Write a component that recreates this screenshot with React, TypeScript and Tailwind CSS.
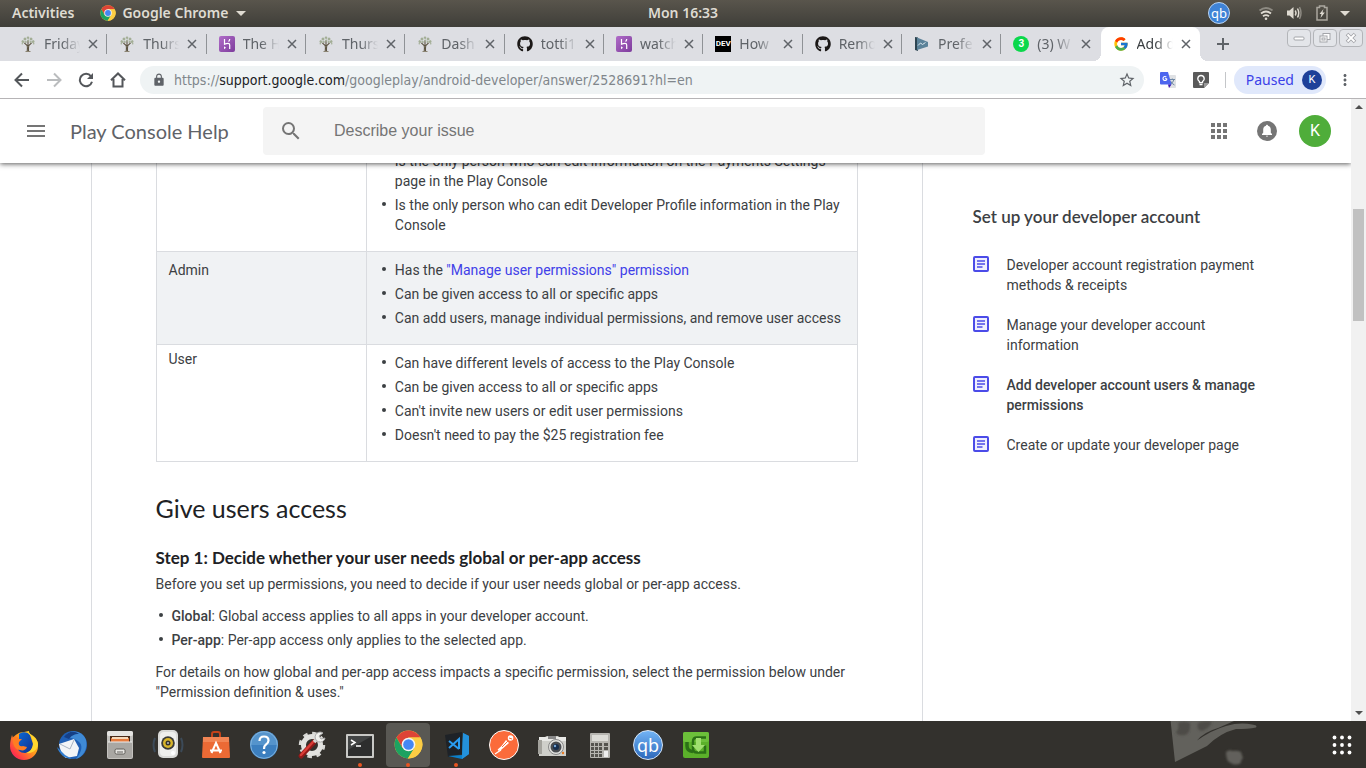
import type { ReactNode } from "react";
import { FaGithub } from "react-icons/fa";
import { FcGoogle } from "react-icons/fc";
import { MdApps, MdMenu, MdSearch, MdStarBorder, MdLock, MdMoreVert } from "react-icons/md";

const UI = "font-['Noto_Sans','Open_Sans',sans-serif]";
const GS = "font-['Lato','Open_Sans',sans-serif]";

/* ---------- favicons ---------- */

function TreeIcon() {
  return (
    <svg viewBox="0 0 16 16" className="size-4" aria-hidden="true">
      <path d="M7.2 15.500c.4-2.500.3-4.500 0-6L4.300 6.800M8.500 15.500c-.2-2.500 0-4.500.3-6l2.800-2.700M8 10V4.500" stroke="#5d5442" strokeWidth="1.100" fill="none" />
      <path d="M5.500 15.500h5" stroke="#8b8473" strokeWidth="1" />
      <g fill="#a3ae96">
        <circle cx="3" cy="5.500" r="1.500" /><circle cx="5" cy="3" r="1.500" /><circle cx="8" cy="1.800" r="1.300" />
        <circle cx="11" cy="3" r="1.500" /><circle cx="13" cy="5.500" r="1.500" /><circle cx="5.800" cy="6" r="1" />
        <circle cx="8.200" cy="4.600" r="1.100" /><circle cx="10.500" cy="6" r="1" /><circle cx="2.300" cy="7.800" r=".8" />
        <circle cx="13.700" cy="7.800" r=".8" />
      </g>
      <g fill="#dadde0"><circle cx="4" cy="4.500" r=".6" /><circle cx="7" cy="3" r=".6" /><circle cx="12" cy="4.500" r=".6" /><circle cx="9.500" cy="3" r=".5" /></g>
    </svg>
  );
}

function HerokuIcon() {
  return (
    <svg viewBox="0 0 16 16" className="size-4" aria-hidden="true">
      <defs><linearGradient id="heroku" x1="0" y1="0" x2="1" y2="1"><stop stopColor="#b06cc8" /><stop offset="1" stopColor="#7d3c9c" /></linearGradient></defs>
      <rect width="16" height="16" rx="2" fill="url(#heroku)" />
      <path d="M5.500 3v5.300c1.200-.6 2.500-.9 3.500-.9 1.300 0 1.700.7 1.700 1.600v4M10.700 3c0 1-.4 1.800-1.100 2.600" stroke="#fff" strokeWidth="1.200" fill="none" />
      <path d="M5 10.300l2 1.500-2 1.500z" fill="#fff" />
    </svg>
  );
}

function DevIcon() {
  return <span className="flex size-4 items-center justify-center bg-black font-['Roboto',sans-serif] text-[8px] leading-4 font-bold text-white">DEV</span>;
}

function FlagIcon() {
  return (
    <svg viewBox="0 0 16 16" className="size-4" aria-hidden="true">
      <path d="M1 1l3 .5v13.500l-3-1z" fill="#2d4552" />
      <path d="M3 1.500L14 6v4.500L3 14z" fill="#5b8299" />
      <path d="M4 9.500L6.500 7l2 1.500 3-2" stroke="#dbe8ef" fill="none" />
    </svg>
  );
}

function WhatsAppIcon() {
  return (
    <span className="flex size-4 items-center justify-center rounded-full bg-[#0bd84b] font-['Roboto',sans-serif] text-[10px] leading-4 font-bold text-white">3</span>
  );
}

function ChromeIcon({ className }: { className: string }) {
  return (
    <svg viewBox="0 0 48 48" className={className} aria-hidden="true">
      <circle cx="24" cy="24" r="23" fill="#fbc93d" />
      <path d="M4.100 12.500A23 23 0 0 1 43.900 12.500H24L14 29.800z" fill="#de4436" />
      <path d="M4.100 12.500A23 23 0 0 0 23 47l10.500-17.200L24 24l-10 5.800z" fill="#1da261" />
      <path d="M24 12.500h19.900A23 23 0 0 1 23 47l11-17.200z" fill="#fccd44" />
      <circle cx="24" cy="24" r="11.300" fill="#f4f4f4" />
      <circle cx="24" cy="24" r="8.800" fill="#4587f3" />
    </svg>
  );
}

/* ---------- desktop top bar ---------- */

function TopBar() {
  return (
    <div className={`${UI} grid h-[27px] shrink-0 grid-cols-[1fr_auto_1fr] items-center bg-linear-to-b from-[#59554c] to-[#3f3e39] pb-px text-[14px] font-semibold text-[#dfdbd2]`}>
      <div className="flex items-center pl-3">
        <button type="button" className="leading-4">Activities</button>
        <button type="button" className="ml-[26px] flex items-center gap-1.5 leading-4">
          <ChromeIcon className="size-4" />
          Google Chrome
          <span className="ml-0.5 h-0 w-0 border-x-[5px] border-t-[5px] border-x-transparent border-t-[#dfdbd2]" />
        </button>
      </div>
      <time className="leading-4">Mon 16:33</time>
      <div className="flex items-center justify-end pr-4">
        <span className="flex size-[22px] items-center justify-center rounded-full border border-[#b9d4f3] bg-[#3f83d6] text-[13px] leading-4 font-normal text-white">qb</span>
        <svg viewBox="0 0 16 16" className="ml-7 size-4" fill="none" stroke="#dfdbd2" strokeWidth="1.800" aria-label="Wi-Fi">
          <path d="M1.500 5.500Q8 .5 14.500 5.500" stroke="#8d8a82" /><path d="M3 8.500Q8 4.500 13 8.500M5 11.300Q8 9 11 11.300" />
          <circle cx="8" cy="13.700" r="1.300" fill="#dfdbd2" stroke="none" />
        </svg>
        <svg viewBox="0 0 16 16" className="ml-3 size-4" fill="none" stroke="#dfdbd2" strokeWidth="1.500" aria-label="Volume">
          <path d="M1 5.500h2.500L7.500 2v12l-4-3.500H1z" fill="#dfdbd2" stroke="none" />
          <path d="M9.300 5.500q1.500 2.500 0 5M11.500 3.500q2.500 4.500 0 9" /><path d="M13.500 2q3 6 0 12" stroke="#8d8a82" />
        </svg>
        <svg viewBox="0 0 12 16" className="ml-3.5 h-4 w-3" fill="none" aria-label="Battery">
          <path d="M3.500 2.500v-1.500h5v1.500h2.500v12.500h-10V2.500z" stroke="#aaa79f" strokeWidth="1.500" />
          <path d="M7.500 4L3.500 9h2l-1 4 4.300-5.500H6.500z" fill="#dfdbd2" />
        </svg>
        <span className="ml-3 h-0 w-0 border-x-[5px] border-t-[5px] border-x-transparent border-t-[#dfdbd2]" />
      </div>
    </div>
  );
}

/* ---------- browser chrome ---------- */

const tabs: { title: string; icon: ReactNode }[] = [
  { title: "Friday", icon: <TreeIcon /> },
  { title: "Thurs", icon: <TreeIcon /> },
  { title: "The H", icon: <HerokuIcon /> },
  { title: "Thurs", icon: <TreeIcon /> },
  { title: "Dash", icon: <TreeIcon /> },
  { title: "totti1", icon: <FaGithub className="size-4 text-[#1b1817]" /> },
  { title: "watch", icon: <HerokuIcon /> },
  { title: "How", icon: <DevIcon /> },
  { title: "Remo", icon: <FaGithub className="size-4 text-[#1b1817]" /> },
  { title: "Prefe", icon: <FlagIcon /> },
  { title: "(3) W", icon: <WhatsAppIcon /> },
  { title: "Add d", icon: <FcGoogle className="size-4" /> },
];

function CloseGlyph() {
  return (
    <svg viewBox="0 0 10 10" className="size-2.5" stroke="#5f6368" strokeWidth="1.500" aria-hidden="true">
      <path d="M1 1l8 8M9 1l-8 8" />
    </svg>
  );
}

function TabStrip() {
  return (
    <div className={`${UI} flex h-[34px] shrink-0 bg-[#dddee3] pl-2`}>
      <div className="flex min-w-0 flex-1">
        {tabs.map((tab, i) => {
          const active = i === tabs.length - 1;
          const divided = i < tabs.length - 2;
          return (
            <div
              key={i}
              className={
                active
                  ? "relative flex min-w-0 flex-1 items-center rounded-t-lg bg-white pl-3"
                  : "relative flex min-w-0 flex-1 items-center pl-3"
              }
            >
              {active && (
                <>
                  <span className="absolute bottom-0 -left-2 size-2 bg-[radial-gradient(circle_at_0_0,transparent_8px,white_8px)]" />
                  <span className="absolute -right-2 bottom-0 size-2 bg-[radial-gradient(circle_at_100%_0,transparent_8px,white_8px)]" />
                </>
              )}
              <span className="shrink-0">{tab.icon}</span>
              <span
                className={
                  active
                    ? "ml-2 w-9 overflow-hidden text-[14px] leading-5 whitespace-nowrap text-[#3c4043] [mask-image:linear-gradient(to_right,black_50%,transparent)]"
                    : "ml-2 w-9 overflow-hidden text-[14px] leading-5 whitespace-nowrap text-[#5f6368] [mask-image:linear-gradient(to_right,black_50%,transparent)]"
                }
              >
                {tab.title}
              </span>
              <button type="button" aria-label={`Close ${tab.title}`} className="ml-2">
                <CloseGlyph />
              </button>
              {divided && <span className="absolute top-[7px] right-0 h-5 w-px bg-[#8f9296]" />}
            </div>
          );
        })}
      </div>
      <div className="flex w-[166px] shrink-0 justify-between pr-[3px] pl-4">
        <button type="button" aria-label="New tab" className="self-center">
          <svg viewBox="0 0 14 14" className="size-3.5" stroke="#5f6368" strokeWidth="2" aria-hidden="true"><path d="M7 1v12M1 7h12" /></svg>
        </button>
        <div className="mt-[2px] flex h-[18px] gap-[2px]">
          <button type="button" aria-label="Minimize" className="flex w-6 items-center justify-center rounded-sm border border-[#b3b5b9] bg-[#e3e5e9]">
            <svg viewBox="0 0 14 12" className="h-3 w-3.5" aria-hidden="true"><rect x="2" y="5" width="10" height="3" rx="1" fill="#fff" stroke="#a3a5a9" /></svg>
          </button>
          <button type="button" aria-label="Restore" className="flex w-6 items-center justify-center rounded-sm border border-[#b3b5b9] bg-[#e3e5e9]">
            <svg viewBox="0 0 14 12" className="h-3 w-3.5" fill="#fff" stroke="#a3a5a9" aria-hidden="true"><rect x="5" y="1.500" width="7" height="6" /><rect x="2" y="4" width="7" height="6" /><rect x="4" y="6" width="3" height="2" /></svg>
          </button>
          <button type="button" aria-label="Close window" className="flex w-6 items-center justify-center rounded-sm border border-[#b3b5b9] bg-[#e3e5e9]">
            <svg viewBox="0 0 14 12" className="h-3 w-3.5" fill="none" aria-hidden="true"><path d="M3 2l8 8M11 2l-8 8" stroke="#a3a5a9" strokeWidth="3.600" /><path d="M3.500 2.500l7 7M10.500 2.500l-7 7" stroke="#fff" strokeWidth="1.800" /></svg>
          </button>
        </div>
      </div>
    </div>
  );
}

function Toolbar() {
  return (
    <div className={`${UI} flex h-[38px] shrink-0 items-center border-b border-[#b6b4b6] bg-white pr-4 pl-[14px]`}>
      <div className="flex items-center gap-4">
        <button type="button" aria-label="Back">
          <svg viewBox="0 0 16 16" className="size-4" fill="none" stroke="#54575b" strokeWidth="2" aria-hidden="true"><path d="M15 8H2M8 1.500L1.500 8 8 14.500" /></svg>
        </button>
        <button type="button" aria-label="Forward">
          <svg viewBox="0 0 16 16" className="size-4" fill="none" stroke="#babcbe" strokeWidth="2" aria-hidden="true"><path d="M1 8h13M8 1.500L14.500 8 8 14.500" /></svg>
        </button>
        <button type="button" aria-label="Reload">
          <svg viewBox="0 0 16 16" className="size-4" fill="none" stroke="#54575b" strokeWidth="2" aria-hidden="true"><path d="M13 4.300A6.200 6.200 0 1 0 14 9.800" /><path d="M15 1v6H9z" fill="#54575b" stroke="none" /></svg>
        </button>
        <button type="button" aria-label="Home">
          <svg viewBox="0 0 16 16" className="size-4" fill="none" stroke="#54575b" strokeWidth="2" aria-hidden="true"><path d="M1 8.300L8 1.500l7 6.800M3.500 7v7.500h9V7" /></svg>
        </button>
      </div>
      <div className="ml-[14px] flex h-7 min-w-0 flex-1 items-center rounded-full bg-[#eff3f4] px-3">
        <MdLock className="size-3.5 shrink-0 text-[#5f6368]" aria-hidden="true" />
        <div className="ml-2 min-w-0 flex-1 truncate font-['DejaVu_Sans_Condensed','Noto_Sans',sans-serif] text-[14px] leading-5 text-[#80868b]">
          https://<span className="text-[#202124]">support.google.com</span>/googleplay/android-developer/answer/2528691?hl=en
        </div>
        <button type="button" aria-label="Bookmark this page" className="-mr-1">
          <MdStarBorder className="size-[18px] text-[#5f6368]" />
        </button>
      </div>
      <button type="button" aria-label="Translate" className="ml-4">
        <svg viewBox="0 0 16 16" className="size-4" aria-hidden="true">
          <path d="M7 3h8a1 1 0 0 1 1 1v11a1 1 0 0 1-1 1H9z" fill="#dfe1e4" />
          <path d="M9.500 7.500h5.500M12.300 6.500v1M14 7.500q-1 3.500-4 5M10.500 9q1.500 3 4 4" stroke="#6d87a3" fill="none" />
          <path d="M1 0h7l3.500 12.500H1a1 1 0 0 1-1-1V1a1 1 0 0 1 1-1z" fill="#4d66ef" />
          <path d="M8 12.500h3.500L9 16z" fill="#3d16b5" />
          <path d="M7 6.700H4.900M6.300 5A2 2 0 1 0 7 6.700" stroke="#fff" strokeWidth="1.100" fill="none" />
        </svg>
      </button>
      <button type="button" aria-label="Keep" className="ml-[17px]">
        <svg viewBox="0 0 16 16" className="size-4" aria-hidden="true">
          <path d="M1 0h14a1 1 0 0 1 1 1v10l-5 5H1a1 1 0 0 1-1-1V1a1 1 0 0 1 1-1z" fill="#5a5a5a" /><path d="M11 11h5l-5 5z" fill="#9a9a9a" />
          <path d="M6.500 9.500C3.500 7.500 4.800 3.500 8 3.500s4.500 4 1.500 6v1.200h-3zM6.500 12.500h3" stroke="#fff" strokeWidth="1.300" fill="none" />
        </svg>
      </button>
      <span className="ml-4 h-4 w-px bg-[#c4c6c9]" />
      <button type="button" className="ml-2 flex h-7 items-center gap-2 rounded-full bg-[#e0e8fb] pr-1 pl-3 text-[14px] leading-5 text-[#3a40e8]">
        Paused
        <span className="flex size-5 items-center justify-center rounded-full bg-[#1e4099] font-['Roboto',sans-serif] text-[11px] leading-5 text-white">K</span>
      </button>
      <button type="button" aria-label="Menu" className="-mr-1 ml-[10px]">
        <MdMoreVert className="size-[18px] text-[#5f6368]" />
      </button>
    </div>
  );
}

/* ---------- help page ---------- */

function HelpHeader() {
  return (
    <header className="relative z-10 flex h-16 shrink-0 items-center bg-white px-6 shadow-[0_1px_5px_rgba(0,0,0,0.65)]">
      <button type="button" aria-label="Main menu" className="text-[#757575]">
        <MdMenu className="size-6" />
      </button>
      <a href="#home" className={`${GS} ml-[22px] w-[193px] shrink-0 text-[20px] leading-6 text-[#5f6368]`}>Play Console Help</a>
      <label className="flex h-12 min-w-0 max-w-[722px] flex-1 items-center rounded-sm bg-[#f4f4f4] pl-4">
        <MdSearch className="size-6 shrink-0 text-[#757575]" aria-hidden="true" />
        <input
          type="text"
          aria-label="Describe your issue"
          placeholder="Describe your issue"
          className="ml-[31px] min-w-0 flex-1 bg-transparent font-['Liberation_Sans',sans-serif] text-[16px] leading-6 text-[#202124] outline-none placeholder:text-[#757575]"
        />
      </label>
      <div className="-mr-1 ml-auto flex items-center">
        <button type="button" aria-label="Google apps" className="text-[#757575]">
          <MdApps className="size-6" />
        </button>
        <button type="button" aria-label="Notifications" className="ml-[26px]">
          <svg viewBox="0 0 20 20" className="size-5" aria-hidden="true">
            <circle cx="10" cy="10" r="10" fill="#757575" />
            <path d="M5 14v-1l1.200-1.200V8.500C6.200 6.600 7.300 5.200 9 4.700c0-1.300 2-1.300 2 0 1.700.5 2.800 1.900 2.800 3.800v3.300L15 13v1zM8.800 14.800h2.400q-1.200 1.800-2.400 0z" fill="#fff" />
          </svg>
        </button>
        <button type="button" aria-label="Account" className="ml-[22px] size-8 rounded-full bg-[#4fad3a] font-['Roboto',sans-serif] text-[16px] leading-8 text-white">K</button>
      </div>
    </header>
  );
}

const BULLET = "relative before:absolute before:top-[7px] before:-left-[13px] before:size-1 before:rounded-full before:bg-[#3c4043]";

function Bullets({ items }: { items: ReactNode[] }) {
  return (
    <ul className="flex flex-col gap-1">
      {items.map((item, i) => (
        <li key={i} className={BULLET}>{item}</li>
      ))}
    </ul>
  );
}

const roles: { name: string; shaded: boolean; items: ReactNode[] }[] = [
  {
    name: "",
    shaded: false,
    items: [
      "Is the only person who can edit information on the Payments Settings page in the Play Console",
      "Is the only person who can edit Developer Profile information in the Play Console",
    ],
  },
  {
    name: "Admin",
    shaded: true,
    items: [
      <>Has the <a href="#permissions" className="text-[#4040e8]">"Manage user permissions" permission</a></>,
      "Can be given access to all or specific apps",
      "Can add users, manage individual permissions, and remove user access",
    ],
  },
  {
    name: "User",
    shaded: false,
    items: [
      "Can have different levels of access to the Play Console",
      "Can be given access to all or specific apps",
      "Can't invite new users or edit user permissions",
      "Doesn't need to pay the $25 registration fee",
    ],
  },
];

const related = [
  { title: "Developer account registration payment methods & receipts", current: false },
  { title: "Manage your developer account information", current: false },
  { title: "Add developer account users & manage permissions", current: true },
  { title: "Create or update your developer page", current: false },
];

function Article() {
  return (
    <article className="min-w-0 flex-1 border-x border-[#dadce0] px-16">
      <table className="-mt-[21px] w-full table-fixed border-collapse border border-[#dadce0] text-left">
        <tbody>
          {roles.map((role) => (
            <tr key={role.name} className={role.shaded ? "bg-[#f0f2f4]" : ""}>
              <th scope="row" className={role.shaded ? "w-[30%] border border-[#dadce0] px-3 pt-2 align-top font-normal" : "w-[30%] border border-[#dadce0] px-3 pt-1 align-top font-normal"}>
                {role.name}
              </th>
              <td className="border border-[#dadce0] pt-2 pr-3 pb-4 pl-7">
                <Bullets items={role.items} />
              </td>
            </tr>
          ))}
        </tbody>
      </table>
      <h2 className={`${GS} mt-[30px] text-[25px] leading-8 text-[#202124]`}>Give users access</h2>
      <h3 className={`${GS} mt-[22px] text-[17px] leading-6 font-bold text-[#202124]`}>Step 1: Decide whether your user needs global or per-app access</h3>
      <p className="mt-1">Before you set up permissions, you need to decide if your user needs global or per-app access.</p>
      <div className="mt-3 pl-4">
        <Bullets
          items={[
            <><strong className="font-medium">Global</strong>: Global access applies to all apps in your developer account.</>,
            <><strong className="font-medium">Per-app</strong>: Per-app access only applies to the selected app.</>,
          ]}
        />
      </div>
      <p className="mt-3">For details on how global and per-app access impacts a specific permission, select the permission below under "Permission definition &amp; uses."</p>
    </article>
  );
}

function Sidebar() {
  return (
    <aside className="w-[338px] shrink-0 pt-[42px] pl-[50px]">
      <h2 className={`${GS} text-[17px] leading-6 font-semibold text-[#3c4043]`}>Set up your developer account</h2>
      <ul className="mt-[26px] flex flex-col gap-5">
        {related.map((item) => (
          <li key={item.title}>
            <a href="#article" className="flex gap-[18px]">
              <svg viewBox="0 0 16 16" className="mt-[1px] size-4 shrink-0" fill="none" stroke="#4b4be8" aria-hidden="true">
                <rect x="1" y="1" width="14" height="14" rx="1" strokeWidth="2" fill="#eeeefe" />
                <path d="M4 5h8M4 8h8M4 11h5.500" strokeWidth="1.500" />
              </svg>
              <span className={item.current ? "font-medium" : ""}>{item.title}</span>
            </a>
          </li>
        ))}
      </ul>
    </aside>
  );
}

function Scrollbar() {
  return (
    <div className="flex w-[15px] shrink-0 flex-col items-center bg-[#f1f1f1] py-[6px]" aria-hidden="true">
      <span className="h-0 w-0 border-x-4 border-b-4 border-x-transparent border-b-[#505050]" />
      <span className="mt-[100px] h-28 w-[11px] bg-[#c1c1c1]" />
      <span className="mt-auto h-0 w-0 border-x-4 border-t-4 border-x-transparent border-t-[#505050]" />
    </div>
  );
}

/* ---------- dock ---------- */

function Art({ children }: { children: ReactNode }) {
  return <svg viewBox="0 0 32 32" className="size-8" aria-hidden="true">{children}</svg>;
}

const dock: { name: string; running: boolean; active: boolean; art: ReactNode }[] = [
  {
    name: "Firefox", running: false, active: false,
    art: (
      <Art>
        <defs>
          <linearGradient id="ff" x1="1" y1="0" x2="0" y2="1"><stop stopColor="#ffe226" /><stop offset=".45" stopColor="#ff9a1c" /><stop offset=".8" stopColor="#ff3647" /><stop offset="1" stopColor="#e31587" /></linearGradient>
          <linearGradient id="ffb" x1="0" y1="0" x2="1" y2="1"><stop stopColor="#0a6bd8" /><stop offset="1" stopColor="#122f8c" /></linearGradient>
        </defs>
        <path d="M4 6l1 3c2-3 6-6 11-6 2 0 3-1 5-1 0 2 1 3 3 4 5 3 6 7 6 11a14 14 0 0 1-28 0c0-4 1-8 2-11z" fill="url(#ff)" />
        <path d="M11 5c4-3 9-2 11 1l3 9c0 6-4 9-8 9-5 0-8-3-8-8 0-2 1-5 2-6z" fill="url(#ffb)" />
        <path d="M5 8c3-1 5 0 6 2h3l-3 3c-1 3 1 5 4 4l4 1c-1 3-4 4-7 3-5 0-8-6-7-13z" fill="#ff7d22" />
        <path d="M20 2c0 3 5 5 5 12 0 6-4 9-7 10 7 1 12-4 12-9 0-6-8-8-10-13z" fill="#ffd52e" />
      </Art>
    ),
  },
  {
    name: "Thunderbird", running: false, active: false,
    art: (
      <Art>
        <circle cx="17" cy="16" r="14" fill="#1f5fb5" />
        <path d="M9 7C13 0 27 1 30 11c2 9-3 17-10 19 5-6 7-12 4-16-3-4-9-5-15-7z" fill="#3f8ad6" />
        <path d="M8 8c3-5 10-7 15-3-5 0-8 2-10 5z" fill="#153f86" />
        <path d="M3 15l15-5 5 9-2 8-11 2C6 27 4 20 3 15z" fill="#f2f4f7" />
        <path d="M4 15l10 5 4-9" stroke="#a9b4c3" fill="none" />
        <path d="M1 18c2 7 8 12 15 12l-7-4z" fill="#2f7cd0" />
      </Art>
    ),
  },
  {
    name: "Files", running: false, active: false,
    art: (
      <Art>
        <rect x="3" y="2" width="26" height="28" rx="2" fill="#c4c2be" /><rect x="3" y="2" width="26" height="5" rx="2" fill="#e5e4e1" />
        <rect x="6" y="7" width="20" height="7" fill="#4a2b19" /><path d="M7 9h18v5H7z" fill="#e57b3e" /><path d="M8 8h16v2H8z" fill="#f6d9b9" />
        <rect x="4" y="13" width="24" height="16" rx="1" fill="#a9a7a3" /><path d="M4 13h24" stroke="#eee" />
        <rect x="11" y="20" width="10" height="5" rx="1.500" fill="#e7e6e3" stroke="#605e5a" /><path d="M13 23h6" stroke="#605e5a" />
      </Art>
    ),
  },
  {
    name: "Rhythmbox", running: false, active: false,
    art: (
      <Art>
        <path d="M3 9q-3 7 0 14M29 9q3 7 0 14" stroke="#3c4a58" strokeWidth="2" fill="none" />
        <rect x="6" y="1" width="20" height="28" rx="5" fill="#dadad8" /><rect x="8" y="3" width="16" height="24" rx="4" fill="#efefed" />
        <circle cx="16" cy="14" r="6.800" fill="#3b3b38" /><circle cx="16" cy="14" r="5" fill="#d8b52a" /><circle cx="16" cy="14" r="2.500" fill="#35332a" /><circle cx="16" cy="14" r="1" fill="#b8bcc2" />
        <circle cx="21" cy="24" r="2" fill="#fff" />
      </Art>
    ),
  },
  {
    name: "Software", running: false, active: false,
    art: (
      <Art>
        <path d="M12 9V5q0-2 2-2h4q2 0 2 2v4" stroke="#c5431a" strokeWidth="2" fill="none" />
        <path d="M3 8h26l1 20q0 1-1 1H3q-1 0-1-1z" fill="#ec6a35" /><path d="M3 8h26v5H3z" fill="#f28554" />
        <path d="M11.500 24L16 14l4.500 10M10 21.500h12" stroke="#fff" strokeWidth="2" fill="none" />
      </Art>
    ),
  },
  {
    name: "Help", running: false, active: false,
    art: (
      <Art>
        <circle cx="16" cy="16" r="14" fill="#3c7fbf" /><path d="M2 16a14 14 0 0 1 28 0z" fill="#5594cc" />
        <circle cx="16" cy="16" r="13.300" stroke="#7fb2dd" fill="none" />
        <path d="M11.500 12q0-4.500 4.500-4.500t4.500 4q0 2.500-2.700 4.200Q16 17 16 20" stroke="#fff" strokeWidth="2.200" fill="none" /><circle cx="16" cy="23.500" r="1.600" fill="#fff" />
      </Art>
    ),
  },
  {
    name: "Settings", running: false, active: false,
    art: (
      <Art>
        <circle cx="16" cy="16" r="11.500" fill="none" stroke="#d7d7d4" strokeWidth="3.500" strokeDasharray="4.500 4.500" />
        <circle cx="16" cy="16" r="8.500" fill="none" stroke="#e2e2df" strokeWidth="5" />
        <path d="M5 27L18 13" stroke="#8f1919" strokeWidth="5" strokeLinecap="round" /><path d="M5 26L17 13" stroke="#d93b36" strokeWidth="2.500" strokeLinecap="round" />
        <path d="M18 13l5-5" stroke="#d5d5d2" strokeWidth="3.500" /><path d="M27 4a5 5 0 1 0 2 5l-4 1-2-3z" fill="#f1f1ee" stroke="#aaa" />
      </Art>
    ),
  },
  {
    name: "Terminal", running: true, active: false,
    art: (
      <Art>
        <rect x="2" y="5" width="28" height="24" rx="1" fill="#c9c9c6" /><rect x="4" y="7" width="24" height="20" fill="#2d2e2e" /><path d="M4 7h24L4 21z" fill="#434545" />
        <path d="M7 11l4 2.500L7 16M12 17h5" stroke="#fff" strokeWidth="1.500" fill="none" />
      </Art>
    ),
  },
  { name: "Google Chrome", running: true, active: true, art: <ChromeIcon className="size-[29px]" /> },
  {
    name: "Visual Studio Code", running: true, active: false,
    art: (
      <Art>
        <path d="M5 6l17-3v22L8 28z" fill="#1e2227" />
        <path d="M23 4l6 3v18l-7 5-14-3 14-1z" fill="#0b80cc" /><path d="M23 4l6 3v18l-7 5z" fill="#2492dc" />
        <path d="M9 12l10 8M9 19l10-9v10" stroke="#2a9df0" strokeWidth="2" fill="none" />
      </Art>
    ),
  },
  {
    name: "Postman", running: false, active: false,
    art: (
      <Art>
        <circle cx="16" cy="16" r="14.500" fill="#fb6b3b" stroke="#fff" />
        <path d="M10 22l8-11 3 3-8 7z" fill="#fff" /><circle cx="22.500" cy="9" r="2.800" fill="#fff" /><path d="M7 25l6-4M10 21l9-8" stroke="#fff" strokeWidth="1.200" /><path d="M14 18l6-6M21 9l3 1" stroke="#fb6b3b" />
      </Art>
    ),
  },
  {
    name: "Screenshot", running: false, active: false,
    art: (
      <Art>
        <path d="M3 8h6l2-1h11l1 1h6q1 0 1 1v18H3z" fill="#cfcfca" /><path d="M3 8h27v4H3z" fill="#e9e9e6" /><path d="M2 11h4v14H2z" fill="#a3a29c" />
        <rect x="12" y="7" width="8" height="3" fill="#888" /><circle cx="20" cy="18" r="7.500" fill="#e2e2df" stroke="#888" /><circle cx="20" cy="18" r="5.500" fill="#494c50" /><circle cx="20" cy="18" r="3" fill="#162d4d" /><circle cx="19" cy="17" r="1.200" fill="#79a9da" />
        <circle cx="27" cy="24" r="1.200" fill="#e77b25" />
      </Art>
    ),
  },
  {
    name: "Calculator", running: false, active: false,
    art: (
      <Art>
        <rect x="6" y="4" width="20" height="25" rx="1" fill="#b6b5b0" /><rect x="8" y="6" width="16" height="6" fill="#dcdcd7" />
        <g fill="#55544f">
          <path d="M7 14h3v3H7zM11 14h3v3h-3zM15 14h3v3h-3zM20 14h4v3h-4zM7 18h3v3H7zM11 18h3v3h-3zM15 18h3v3h-3zM20 18h4v3h-4zM7 22h3v2H7zM11 22h3v2h-3zM15 22h3v2h-3zM7 25h3v3H7zM11 25h3v3h-3zM15 25h3v3h-3z" />
        </g>
        <path d="M20 22h4v6h-4z" fill="#eee" />
      </Art>
    ),
  },
  {
    name: "qBittorrent", running: false, active: false,
    art: <span className={`${UI} flex size-[30px] items-center justify-center rounded-full border border-[#d8e7f8] bg-linear-to-b from-[#72b4f5] to-[#2d68bb] text-[18px] leading-5 text-white`}>qb</span>,
  },
  {
    name: "Downloader", running: false, active: false,
    art: (
      <Art>
        <rect x="3" y="3" width="26" height="26" rx="2" fill="#5bb02a" /><rect x="3" y="3" width="26" height="10" rx="2" fill="#6cc03a" />
        <path d="M26 8.500h-9q-4 0-4 4v7q0 4 4 4h8v-7" stroke="#2b7016" strokeWidth="2.500" fill="none" /><path d="M7 13v4q0 5 6 5.500" stroke="#2b7016" strokeWidth="3.500" fill="none" />
        <path d="M16 9h5v7h4l-6.500 7-6.500-7h4z" fill="#a0df70" />
      </Art>
    ),
  },
];

function Dock() {
  return (
    <nav aria-label="Dock" className="relative flex h-[47px] shrink-0 items-center overflow-hidden bg-[#33312d]">
      <svg viewBox="0 0 90 47" className="absolute top-0 right-[108px] h-[47px] w-[90px]" aria-hidden="true">
        <defs><filter id="soft" x="-20%" y="-20%" width="140%" height="140%"><feGaussianBlur stdDeviation="0.8" /></filter></defs>
        <path d="M2.600 0L7 41 39 25Q52 12 68 8 80 8 88 6.500 90 4 84 3.500 72 1 58 5 44 9 29 19.500 36 11 50 7L66 0z" fill="#62615c" />
        <g filter="url(#soft)">
          <path d="M10 2q6-3 12 0 1 10-5 12-8 1-9-3 4-4 2-9zM30 2q7-3 14-1-2 6-10 9-6-1-4-8z" fill="#4d4c47" />
          <path d="M58 31q4-3 6-1 5-1 9 1 1 4 2 6-3 3-2 5-6 3-10 0-5-1-5-11z" fill="#62615c" />
        </g>
      </svg>
      {dock.map((app) => (
        <button
          key={app.name}
          type="button"
          aria-label={app.name}
          className={
            app.active
              ? "relative mx-0.5 flex h-11 w-11 items-center justify-center rounded-sm bg-[#595853]"
              : "relative mx-0.5 flex h-11 w-11 items-center justify-center"
          }
        >
          {app.art}
          {app.running && <span className="absolute bottom-0 size-1 rounded-full bg-[#e95420]" />}
        </button>
      ))}
      <button type="button" aria-label="Show applications" className="mr-[14px] ml-auto">
        <svg viewBox="0 0 20 20" className="size-5" fill="#fff" aria-hidden="true">
          <circle cx="2.500" cy="2.500" r="1.900" /><circle cx="10" cy="2.500" r="1.900" /><circle cx="17.500" cy="2.500" r="1.900" />
          <circle cx="2.500" cy="10" r="1.900" /><circle cx="10" cy="10" r="1.900" /><circle cx="17.500" cy="10" r="1.900" />
          <circle cx="2.500" cy="17.500" r="1.900" /><circle cx="10" cy="17.500" r="1.900" /><circle cx="17.500" cy="17.500" r="1.900" />
        </svg>
      </button>
    </nav>
  );
}

export default function App() {
  return (
    <div className="flex h-screen flex-col overflow-hidden bg-white">
      <TopBar />
      <TabStrip />
      <Toolbar />
      <div className="flex min-h-0 flex-1">
        <div className="flex min-w-0 flex-1 flex-col overflow-hidden">
          <HelpHeader />
          <main className="min-h-0 flex-1 overflow-hidden font-['Roboto',sans-serif] text-[14px] leading-5 text-[#3c4043]">
            <div className="mx-auto flex min-h-full max-w-[1170px]">
              <Article />
              <Sidebar />
            </div>
          </main>
        </div>
        <Scrollbar />
      </div>
      <Dock />
    </div>
  );
}
